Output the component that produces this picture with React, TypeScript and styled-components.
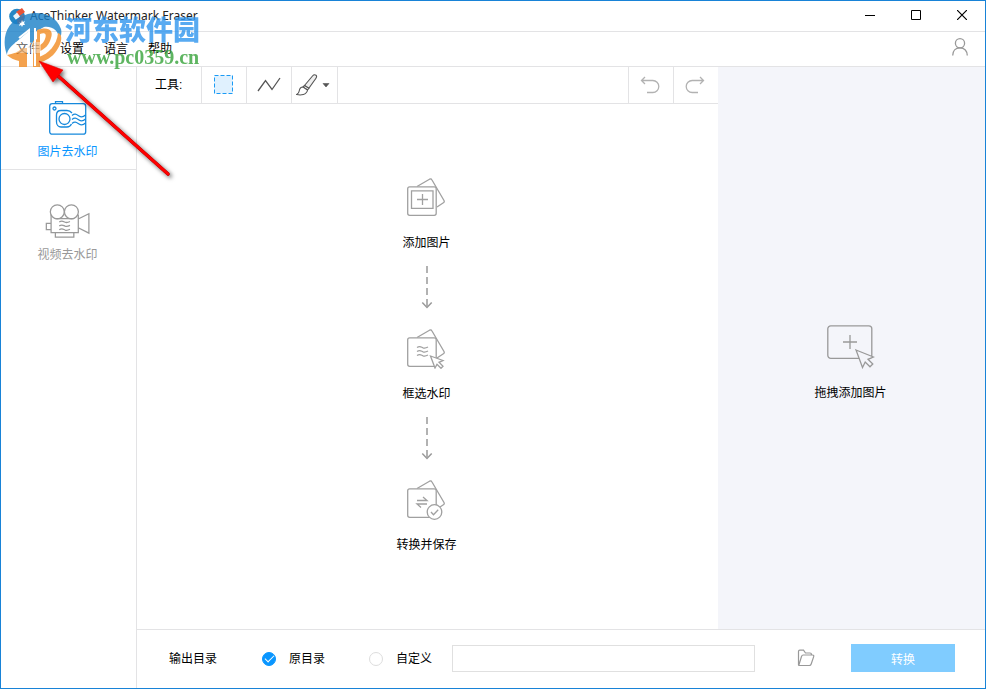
import React from "react";
import styled, { createGlobalStyle } from "styled-components";

const line = "#e3e3e5";
const brand = "#0996ff";

const GlobalStyle = createGlobalStyle`
  * { box-sizing: border-box; }
  body { margin: 0; background: #fff; }
  body, button, input { font-family: "Liberation Sans", "Noto Sans CJK SC", sans-serif; font-size: 12px; color: #000; }
`;

const Window = styled.div`
  position: relative;
  display: flex;
  flex-direction: column;
  min-height: 100vh;
  border: 1px solid #1883d7;
  background: #fff;
  line-height: 16px;
`;

const TitleBar = styled.header`
  display: flex;
  align-items: center;
  height: 31px;
  padding-left: 8px;
  border-bottom: 1px solid ${line};
`;

const Title = styled.h1`
  flex: 1;
  margin: 0 0 0 4px;
  font: 400 12px/16px "Noto Sans", sans-serif;
  color: #222;
`;

const PlainButton = styled.button`
  display: flex;
  align-items: center;
  justify-content: center;
  padding: 0;
  border: 0;
  background: none;
`;

const CaptionButton = styled(PlainButton)`
  width: 46px;
  height: 30px;
  padding-bottom: 2px;
`;

const MenuBar = styled.nav`
  display: flex;
  align-items: center;
  gap: 20px;
  height: 35px;
  padding: 0 17px 4px 15px;
  border-bottom: 1px solid ${line};
`;

const AccountButton = styled(PlainButton)`
  margin-left: auto;
`;

const Body = styled.div`
  display: flex;
  flex: 1;
`;

const Sidebar = styled.aside`
  width: 136px;
  border-right: 1px solid ${line};
`;

const ModeButton = styled(PlainButton)<{ $active?: boolean }>`
  flex-direction: column;
  justify-content: flex-start;
  gap: 9px;
  width: 100%;
  height: 103px;
  padding: 34px 2px 0 0;
  border-bottom: 1px solid ${(p) => (p.$active ? line : "transparent")};
  color: ${(p) => (p.$active ? brand : "#999")};
  line-height: 16px;
`;

const Main = styled.main`
  display: flex;
  flex: 1;
  flex-direction: column;
`;

const Workspace = styled.div`
  display: flex;
  flex: 1;
`;

const Editor = styled.section`
  display: flex;
  flex: 1;
  flex-direction: column;
`;

const Toolbar = styled.div`
  display: flex;
  height: 37px;
  border-bottom: 1px solid ${line};
`;

const ToolLabel = styled.span`
  width: 65px;
  padding: 10px 0 0 18px;
  border-right: 1px solid ${line};
`;

const ToolButton = styled(PlainButton)<{ $end?: boolean; $wide?: boolean }>`
  width: ${(p) => (p.$wide ? 46 : 45)}px;
  padding-right: ${(p) => (p.$wide ? 4 : p.$end ? 2 : 0)}px;
  border: 0 solid ${line};
  border-width: ${(p) => (p.$end ? "0 0 0 1px" : "0 1px 0 0")};
`;

const ToolSpacer = styled.span`
  flex: 1;
`;

const Steps = styled.div`
  display: flex;
  flex: 1;
  flex-direction: column;
  align-items: center;
  justify-content: center;
  padding: 0 2px 3px 0;
`;

const Step = styled.div`
  display: flex;
  flex-direction: column;
  align-items: center;
  gap: 17px;
`;

const StepArrow = styled.svg`
  margin: 15px 0 20px;
`;

const DropPanel = styled.section`
  display: flex;
  flex-direction: column;
  align-items: center;
  justify-content: center;
  gap: 16px;
  width: 267px;
  padding: 30px 2px 0 0;
  background: #f4f5fa;
`;

const Footer = styled.footer`
  display: flex;
  align-items: center;
  height: 59px;
  padding: 0 30px 2px 32px;
  border-top: 1px solid ${line};
`;

const FieldName = styled.span`
  padding-top: 2px;
`;

const Choices = styled.div`
  display: flex;
  gap: 44px;
  margin: 0 20px 0 45px;
`;

const Choice = styled.label`
  display: flex;
  align-items: center;
  gap: 13px;
  padding-top: 1px;
`;

const Radio = styled.input`
  display: grid;
  place-items: center;
  width: 14px;
  height: 14px;
  margin: 0;
  appearance: none;
  border: 1px solid #ddd;
  border-radius: 50%;
  &:checked {
    border-color: ${brand};
    background: ${brand};
  }
  &:checked::after {
    content: "";
    width: 8px;
    height: 4px;
    margin-bottom: 2px;
    border: solid #fff;
    border-width: 0 0 1px 1px;
    rotate: -45deg;
  }
`;

const PathInput = styled.input`
  flex: 1;
  min-width: 60px;
  height: 27px;
  padding: 0 6px;
  border: 1px solid #e0e0e0;
  background: #fff;
`;

const FolderButton = styled(PlainButton)`
  margin: 0 36px 0 42px;
`;

const ConvertButton = styled.button`
  width: 104px;
  height: 28px;
  padding: 0;
  border: 0;
  background: #80ccff;
  color: #fff;
`;

const Stamp = styled.div`
  position: absolute;
  top: 10px;
  left: 3px;
  display: flex;
  gap: 1px;
  opacity: 0.8;
  pointer-events: none;
`;

const StampText = styled.div`
  display: flex;
  flex-direction: column;
`;

const StampName = styled.span`
  font: 900 27px/36px "Noto Sans CJK SC", sans-serif;
  color: #2f95ee;
`;

const StampSite = styled.span`
  padding-left: 2px;
  font: 700 20px/20px "Liberation Serif", serif;
  color: #37a33a;
`;

const Pointer = styled.svg`
  position: absolute;
  top: 52px;
  left: 30px;
  pointer-events: none;
`;

const AppLogo = () => (
  <svg width="17" height="18" viewBox="0 0 17 18">
    <circle cx="8" cy="9.500" r="7.800" fill="#2687c5" />
    <path d="m7 5 6-4 3 4-6 4.500Z" fill="#e65337" />
    <path d="m4 9 4-3.500 3 4L7 13Z" fill="#fff" opacity=".9" />
    <path d="m8 13 6-5 1.500 2c0 3-3 6.500-7 7Z" fill="#e65337" />
  </svg>
);

const StampLogo = () => (
  <svg width="60" height="58" viewBox="0 0 60 58">
    <path d="M3 44C-3 28 2 10 21 4c15-5 31 0 36 14 1 4 0 8-2 11 0-9-6-14-15-13l-9 5v11h-6V20L11 32C6 36 3 40 3 44Z" fill="#1a80c8" />
    <path d="M54 22c5 1 4 10-1 17-5 8-12 11-18 13v-6c9-3 18-12 19-24Z" fill="#f28c22" />
    <path d="M33 19c11-4 17 0 14 8-2 7-6 11-11 13v16h-7V30l4-2Z" fill="#f28c22" />
    <path d="M3 44c6-1 11-3 15-7h5v19h-8v-6c-5-1-9-3-12-6Z" fill="#f28c22" />
    <path d="M36 23c5-2 7 0 5 5-1 3-3 5-5 6Z" fill="#fff" />
    <path d="M15 27 25 19v36M31 17v38" fill="none" stroke="#fff" strokeWidth="2" />
    <path d="m18 9 1 2 2-1-1 2 1 2h-2l-1 2-1-2-2 1 1-3-1-1 2 1Z" fill="#fff" />
    <path d="M11 31h26v11H11Z" fill="#fff" opacity=".4" />
  </svg>
);

const CameraIcon = () => (
  <svg width="38" height="34" viewBox="0 0 38 34" fill="none" stroke="#1689dc" strokeWidth="1.300">
    <rect x=".7" y="2.700" width="36" height="30.500" rx="2.500" />
    <path d="M6.500 2.500V.7h7v1.800" />
    <circle cx="5.500" cy="7.500" r="1.500" />
    <path d="M23 12c-1.500-1.800-3-2.500-5-2.500h-6c-3 0-4.500 2-4.500 4.500v7c0 3 2 5 4.500 5h6c2 0 3.500-1 4.500-3" />
    <circle cx="15.500" cy="18" r="5.500" />
    <path d="M23 14.500c3-2.500 4.500-1 7 .5 2 1.300 4 1.300 6.500-1M23 18.500c3-2.500 4.500-1 7 .5 2 1.300 4 1.300 6.500-1M23 22.500c3-2.500 4.500-1 7 .5 2 1.300 4 1.300 6.500-1" />
  </svg>
);

const VideoIcon = () => (
  <svg width="46" height="34" viewBox="0 0 46 35" fill="none" stroke="#999" strokeWidth="1.300">
    <circle cx="12" cy="8" r="7.200" />
    <circle cx="26.500" cy="8" r="7.200" />
    <path d="M5.600 11v18.500h28V11M10 15h19M5.500 20H.7v6.500h4.800M10 29.500V34h19v-4.500M33.500 15.500l11-5.500v20l-11-5.500M14 18.500c3-2 4-.5 6 .3 2 .7 3 .3 5-.8M14 22.500c3-2 4-.5 6 .3 2 .7 3 .3 5-.8M14 26.500c3-2 4-.5 6 .3 2 .7 3 .3 5-.8" />
  </svg>
);

const Photos = ({ children }: { children: React.ReactNode }) => (
  <svg width="40" height="40" viewBox="0 0 40 40" fill="none" stroke="#a0a0a0" strokeWidth="1.300">
    <path d="M11 8.500 23.500 1.200c1-.5 2-.2 2.500.8l12 20.500c.5 1 .2 1.800-.6 2.300L31 29" />
    <rect x="1.700" y="8.800" width="28.500" height="28.500" rx="2" fill="#fff" />
    {children}
  </svg>
);

const DownArrow = () => (
  <StepArrow width="12" height="43" viewBox="0 0 12 43" fill="none" stroke="#999" strokeWidth="1.500">
    <path d="M6 0v41" strokeDasharray="7 4" />
    <path d="m1.300 36.500 4.700 5 4.700-5" />
  </StepArrow>
);

export default function App() {
  return (
    <Window>
      <GlobalStyle />
      <TitleBar>
        <AppLogo />
        <Title>AceThinker Watermark Eraser</Title>
        <CaptionButton aria-label="最小化">
          <svg width="10" height="10"><path d="M0 5.500h10" stroke="#000" /></svg>
        </CaptionButton>
        <CaptionButton aria-label="最大化">
          <svg width="10" height="10"><path d="M.5.5h9v9h-9Z" fill="none" stroke="#000" /></svg>
        </CaptionButton>
        <CaptionButton aria-label="关闭">
          <svg width="10" height="10"><path d="m0 0 10 10m0-10-10 10" stroke="#000" strokeWidth="1.200" /></svg>
        </CaptionButton>
      </TitleBar>
      <MenuBar>
        <PlainButton>文件</PlainButton>
        <PlainButton>设置</PlainButton>
        <PlainButton>语言</PlainButton>
        <PlainButton>帮助</PlainButton>
        <AccountButton aria-label="账户">
          <svg width="16" height="18" viewBox="0 0 16 18" fill="none" stroke="#999" strokeWidth="1.300">
            <circle cx="8" cy="5.300" r="4.600" />
            <path d="M.7 17.500C.7 13 3.500 9.800 8 9.800s7.300 3.200 7.300 7.700" />
          </svg>
        </AccountButton>
      </MenuBar>
      <Body>
        <Sidebar>
          <ModeButton $active><CameraIcon />图片去水印</ModeButton>
          <ModeButton><VideoIcon />视频去水印</ModeButton>
        </Sidebar>
        <Main>
          <Workspace>
            <Editor>
              <Toolbar>
                <ToolLabel>工具:</ToolLabel>
                <ToolButton aria-label="矩形选择">
                  <svg width="20" height="20"><rect x=".5" y=".5" width="18" height="18" fill="#e0f1fe" stroke="#1b9bf5" strokeDasharray="4 2" /></svg>
                </ToolButton>
                <ToolButton aria-label="折线">
                  <svg width="24" height="16" fill="none" stroke="#555" strokeWidth="1.300"><path d="m1 14 7.500-10.500 6.500 9L23 1" /></svg>
                </ToolButton>
                <ToolButton $wide aria-label="画笔">
                  <svg width="34" height="22" viewBox="0 0 34 22" fill="#fff" stroke="#555" strokeWidth="1.100">
                    <path d="M8.500 11.500 16.500 2c1-1.200 2.500-1.500 3.500-.8.800.7.700 2-.2 3.300l-7 9.800Z" fill="#eee" />
                    <path d="m8.500 11.500 4.300 2.800-1.300 1.700-4.500-3Z" />
                    <path d="M7 13c-3 0-3.500 2-3.800 4-.2 1.500-1 2.800-2.500 3.500 4 1 10 .5 10.800-4.500Z" />
                    <path d="M27 9.500h6l-3 3.500Z" fill="#555" stroke="#555" strokeWidth=".6" />
                  </svg>
                </ToolButton>
                <ToolSpacer />
                <ToolButton $end aria-label="撤销">
                  <svg width="20" height="18" viewBox="0 0 20 18" fill="none" stroke="#b2b2b2" strokeWidth="1.300">
                    <path d="M5 1 1.500 4.500 5 8M1.500 4.500h11.300a5.800 5.800 0 0 1 0 12H7" />
                  </svg>
                </ToolButton>
                <ToolButton $end aria-label="重做">
                  <svg width="20" height="18" viewBox="0 0 20 18" fill="none" stroke="#b2b2b2" strokeWidth="1.300">
                    <path d="M15 1 18.500 4.500 15 8M18.500 4.500H7.200a5.800 5.800 0 0 0 0 12H13" />
                  </svg>
                </ToolButton>
              </Toolbar>
              <Steps>
                <Step>
                  <Photos><path d="M5.500 12.800H27v17.500H5.500ZM11 21.500h11M16.500 16v11" /></Photos>
                  添加图片
                </Step>
                <DownArrow />
                <Step>
                  <Photos>
                    <path d="M11 18.500c3-2 4-.5 6 .3 2 .7 3 .3 5-.8M11 22.500c3-2 4-.5 6 .3 2 .7 3 .3 5-.8M11 26.500c3-2 4-.5 6 .3 2 .7 3 .3 5-.8" />
                    <path d="m24.500 27 12.500 4.500-4 1.800 4 4-2 2-4-4-2 3.700Z" fill="#fff" />
                  </Photos>
                  框选水印
                </Step>
                <DownArrow />
                <Step>
                  <Photos>
                    <path d="M11 20.500h10l-4-3.500M21 24H11l4 3.500" />
                    <circle cx="28.500" cy="32" r="7.300" fill="#fff" />
                    <path d="m25 32 2.500 2.700 4.700-5" />
                  </Photos>
                  转换并保存
                </Step>
              </Steps>
            </Editor>
            <DropPanel>
              <svg width="48" height="44" viewBox="0 0 48 44" fill="none" stroke="#999" strokeWidth="1.300">
                <rect x=".8" y=".8" width="44" height="32.500" rx="3" />
                <path d="M16 17h14M23 10v14" />
                <path d="m29 25 17.500 7-5.500 2.300 4.800 4.700-2.800 2.800-4.800-4.800-2.700 5.500Z" fill="#f4f5fa" />
              </svg>
              拖拽添加图片
            </DropPanel>
          </Workspace>
          <Footer>
            <FieldName>输出目录</FieldName>
            <Choices>
              <Choice><Radio type="radio" name="output" defaultChecked />原目录</Choice>
              <Choice><Radio type="radio" name="output" />自定义</Choice>
            </Choices>
            <PathInput type="text" aria-label="输出目录" />
            <FolderButton aria-label="浏览">
              <svg width="18" height="18" viewBox="0 0 18 18" fill="none" stroke="#999" strokeWidth="1.200">
                <path d="M1.500 16V2.500c0-.8.500-1.300 1.300-1.300h3.700L8.500 4H13c1 0 1.500.5 1.500 1.500V6M1.800 16.300 4.500 7.500C4.800 6.500 5.200 6 6.200 6h9.300c1 0 1.500.7 1.200 1.600l-2.500 7.400c-.3 1-.8 1.500-1.800 1.500H2.500c-.7 0-1-.2-1-.8" />
              </svg>
            </FolderButton>
            <ConvertButton>转换</ConvertButton>
          </Footer>
        </Main>
      </Body>
      <Stamp>
        <StampLogo />
        <StampText>
          <StampName>河东软件园</StampName>
          <StampSite>www.pc0359.cn</StampSite>
        </StampText>
      </Stamp>
      <Pointer width="150" height="136" viewBox="0 0 150 136">
        <defs>
          <filter id="shadow" x="-20%" y="-20%" width="140%" height="140%">
            <feDropShadow dx="2" dy="2" stdDeviation="2" floodColor="#000" floodOpacity=".6" />
          </filter>
        </defs>
        <g filter="url(#shadow)">
          <path d="M26 22 137 121" stroke="#900" strokeWidth="3.600" strokeLinecap="round" />
          <path d="M26 22 137 121" stroke="#ff0000" strokeWidth="3" strokeLinecap="round" />
          <path d="m8 8 24 9-4 5-6 7Z" fill="#ff0000" stroke="#c00" strokeWidth=".5" />
        </g>
      </Pointer>
    </Window>
  );
}
